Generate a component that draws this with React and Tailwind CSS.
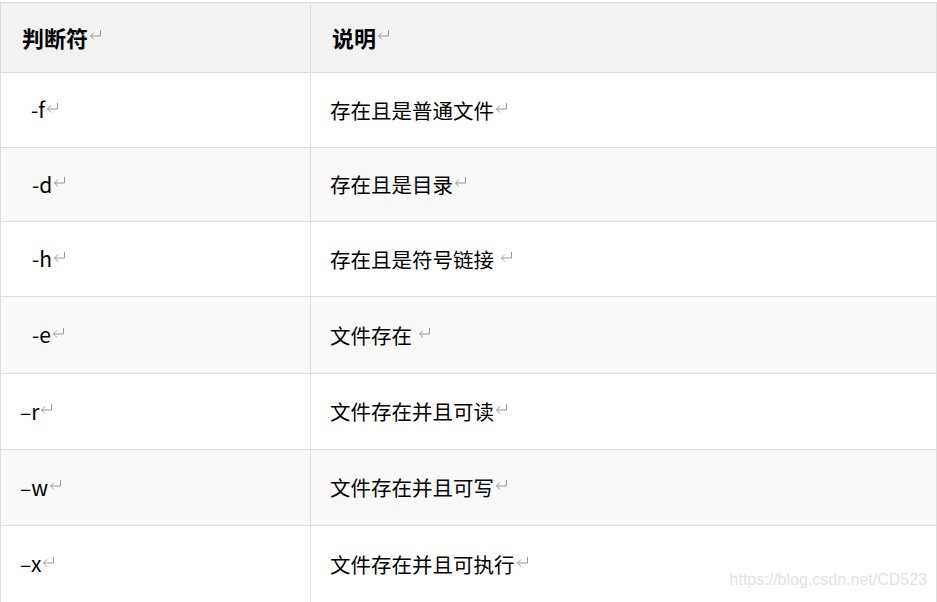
import React from 'react';

const rows = [
  { flag: '-f', desc: '存在且是普通文件', h: 'h-[75px]', pad: 'pl-[30px]' },
  { flag: '-d', desc: '存在且是目录', h: 'h-[74px]', pad: 'pl-[31px]', alt: true },
  { flag: '-h', desc: '存在且是符号链接 ', h: 'h-[75px]', pad: 'pl-[31px]' },
  { flag: '-e', desc: '文件存在 ', h: 'h-[77px]', pad: 'pl-[31px]', alt: true },
  { flag: '–r', desc: '文件存在并且可读', h: 'h-[76px]', pad: 'pl-[19px]' },
  { flag: '–w', desc: '文件存在并且可写', h: 'h-[76px]', pad: 'pl-[19px]', alt: true },
  { flag: '–x', desc: '文件存在并且可执行', h: 'h-[77px]', pad: 'pl-[19px]' },
];

// word-style paragraph mark
const Mark = () => (
  <svg width="13" height="11" viewBox="0 0 13 11" className="inline-block ml-[1px] -translate-y-[3px]">
    <path d="M11.5 1 V7 H1.5 M1.5 7 L5 3.5 M1.5 7 L5 10.5" fill="none" stroke="#9a9a9a" strokeWidth="1" />
  </svg>
);

const App = () => {
  return (
    <div className="relative w-[937px] h-[602px] overflow-hidden bg-white pt-[2px] text-black" style={{ fontFamily: '"Noto Sans CJK SC", "Noto Sans", sans-serif' }}>
      <div className="border-t border-[#dedede]">
        {/* header */}
        <div className="grid grid-cols-[310px_1fr] h-[70px] border-x border-b border-[#dedede] bg-[#f2f2f2]">
          <div className="flex items-center pl-[21px] border-r border-[#dedede] text-[22px] font-bold">
            判断符<Mark />
          </div>
          <div className="flex items-center pl-[21px] text-[22px] font-bold">
            说明<Mark />
          </div>
        </div>

        {rows.map((r) => (
          <div
            key={r.flag}
            className={`grid grid-cols-[310px_1fr] ${r.h} border-x border-b border-[#dedede] ${r.alt ? 'bg-[#f9f9f9]' : 'bg-white'}`}
          >
            <div className={`flex items-center ${r.pad} border-r border-[#dedede] text-[21px]`}>
              <span className="whitespace-pre">{r.flag}</span><Mark />
            </div>
            <div className="flex items-center pl-[19px] text-[20.5px]">
              <span className="whitespace-pre">{r.desc}</span><Mark />
            </div>
          </div>
        ))}
      </div>

      {/* watermark */}
      <div className="absolute right-[10px] bottom-[10px] text-[16px] text-[#e3e3e3]" style={{ fontFamily: '"Liberation Sans", Arial, sans-serif' }}>
        https://blog.csdn.net/CD523
      </div>
    </div>
  );
};

export default App;
